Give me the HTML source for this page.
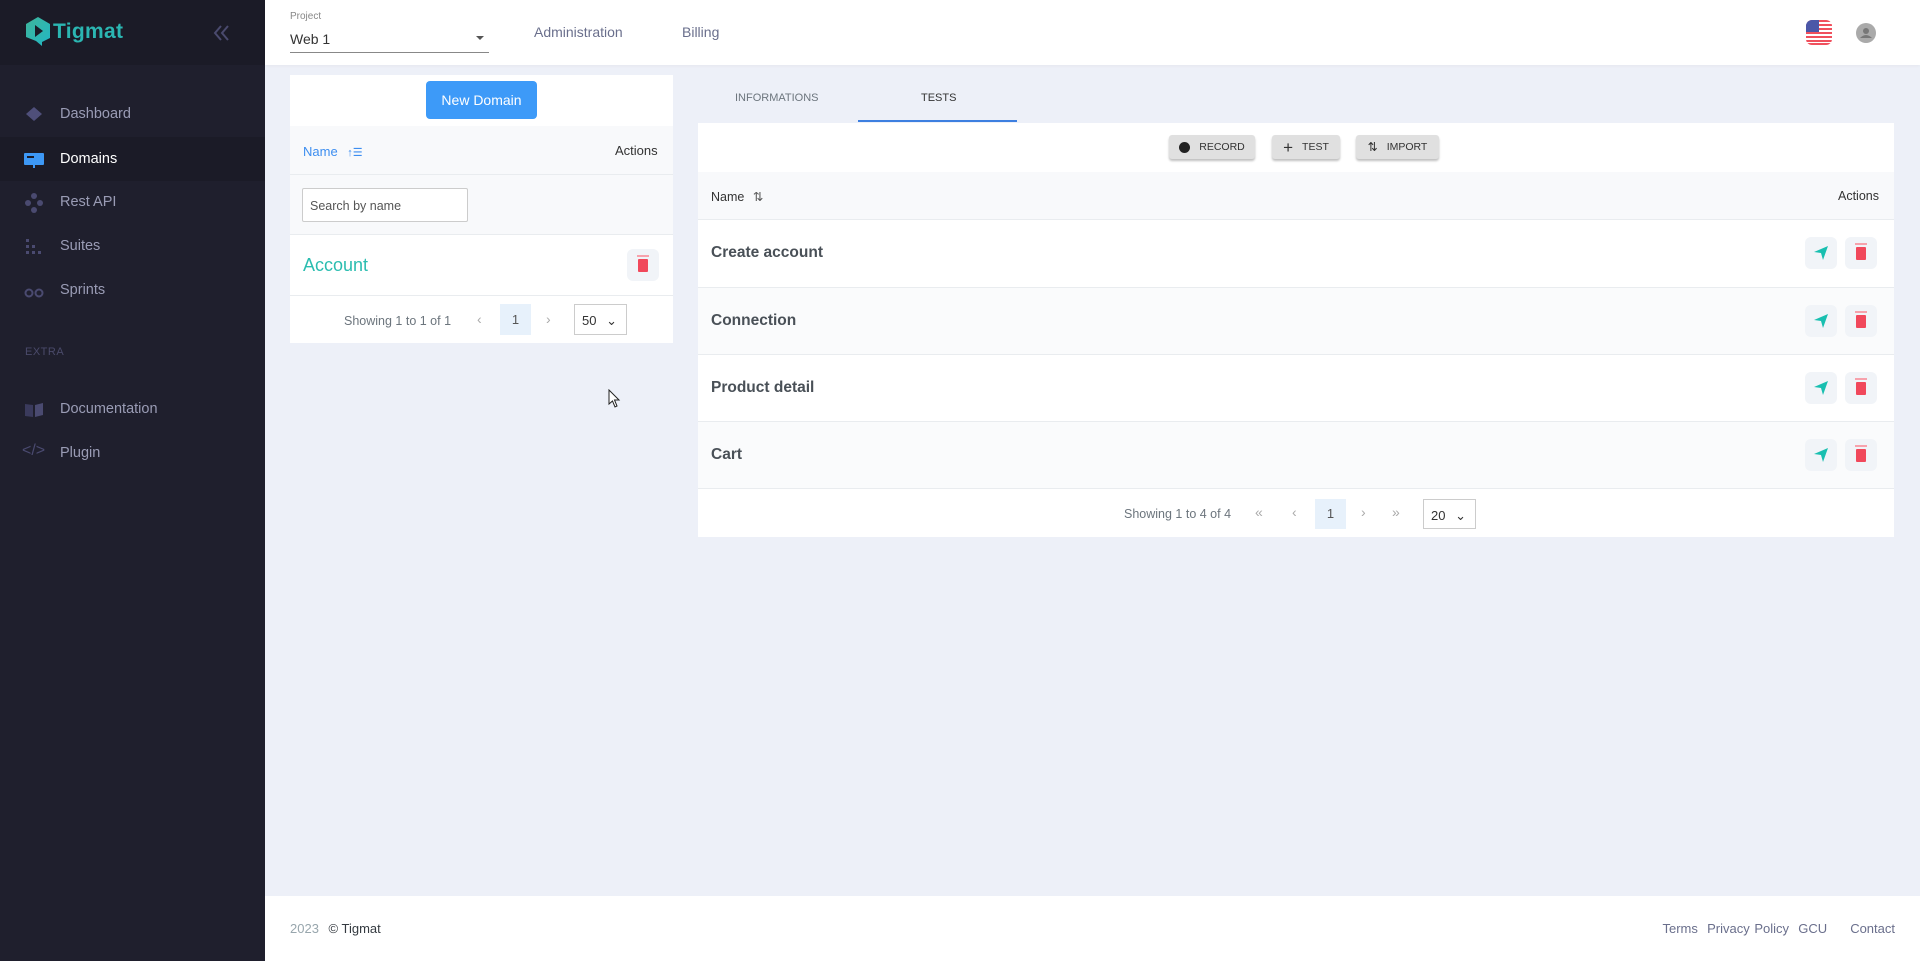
<!DOCTYPE html>
<html><head><meta charset="utf-8"><style>
*{box-sizing:border-box;margin:0;padding:0}
body{width:1920px;height:961px;overflow:hidden;background:#edf0f8;font-family:"Liberation Sans",sans-serif;position:relative;color:#343a40}
.abs{position:absolute}
#sb{left:0;top:0;width:265px;height:961px;background:#1f1f2d}
#logo{left:0;top:0;width:265px;height:65px;background:#1b1b27}
.nav{left:0;width:265px;height:44px;display:flex;align-items:center;padding-left:60px;font-size:14.5px;color:#9a9cb5}
.nav .ic{position:absolute;left:24px;top:13px;width:20px;height:18px}
#hdr{left:265px;top:0;width:1655px;height:65px;background:#fff;box-shadow:0 1px 3px rgba(0,0,0,.04)}
.card{background:#fff}
.btn{position:absolute;height:24px;top:135px;background:#e0e0e0;border-radius:3px;box-shadow:0 2px 2px rgba(0,0,0,.25);font-size:10.5px;color:#333;display:flex;align-items:center;justify-content:center;gap:9px}
.row{position:absolute;left:698px;width:1196px;height:67px;border-top:1px solid #e9ecef;font-size:15.5px;font-weight:bold;color:#495057;padding-left:13px;display:flex;align-items:center}
.ab{position:absolute;width:32px;height:32px;background:#f1f4f8;border-radius:6px;top:17px}
.trash{position:absolute;left:11px;top:10px;width:10px;height:13px;background:#f1485b;border-radius:1px}
.trash:before{content:"";position:absolute;left:-1px;top:-4px;width:12px;height:2px;background:#f7a2ac}
</style></head><body>
<div id="sb" class="abs"></div>
<div id="logo" class="abs">
<svg class="abs" style="left:26px;top:17px" width="24" height="30" viewBox="0 0 24 30"><defs><linearGradient id="g" x1="0" y1="0" x2="1" y2="1"><stop offset="0" stop-color="#3fb59a"/><stop offset="1" stop-color="#21b6c4"/></linearGradient></defs><path d="M12 0 L24 7 V21 L16 25 L16 29 L10 24 L0 20 V7Z" fill="url(#g)"/><path d="M9 8 L17 14 L9 20Z" fill="#1b1b27"/></svg>
<div class="abs" style="left:53px;top:20px;font-size:21px;font-weight:bold;color:#2bb6b2;letter-spacing:.3px">Tigmat</div>
<svg class="abs" style="left:212px;top:24px" width="20" height="18"><path d="M9 2 L3 9 L9 16 M16 2 L10 9 L16 16" stroke="#4a4a6e" stroke-width="2" fill="none"/></svg>
</div>
<div class="nav abs" style="top:92px"><span class="ic"><svg width="20" height="20"><path d="M10 2 L18 9 L10 16 L2 9Z" fill="#4f4f7a"/></svg></span>Dashboard</div>
<div class="nav abs" style="top:137px;background:#1b1b27;color:#fff"><span class="ic"><svg width="20" height="20"><rect x="0" y="3" width="20" height="12" rx="1" fill="#3d98f5"/><rect x="3" y="6" width="7" height="2" fill="#1b1b27"/><rect x="9" y="15" width="2" height="3" fill="#3d98f5"/></svg></span>Domains</div>
<div class="nav abs" style="top:180px"><span class="ic"><svg width="20" height="20"><circle cx="10" cy="3" r="3" fill="#4a4a70"/><circle cx="4" cy="10" r="3" fill="#4a4a70"/><circle cx="16" cy="10" r="3" fill="#4a4a70"/><circle cx="10" cy="17" r="3" fill="#4a4a70"/></svg></span>Rest API</div>
<div class="nav abs" style="top:224px"><span class="ic"><svg width="20" height="20"><g fill="#4a4a70"><rect x="2" y="2" width="3" height="3"/><rect x="2" y="8" width="3" height="3"/><rect x="2" y="14" width="3" height="3"/><rect x="8" y="14" width="3" height="3"/><rect x="14" y="14" width="3" height="3"/><rect x="8" y="8" width="3" height="3"/></g></svg></span>Suites</div>
<div class="nav abs" style="top:268px"><span class="ic"><svg width="22" height="20"><circle cx="5" cy="12" r="3.5" stroke="#4a4a70" stroke-width="2" fill="none"/><circle cx="15" cy="12" r="3.5" stroke="#4a4a70" stroke-width="2" fill="none"/></svg></span>Sprints</div>
<div class="abs" style="left:25px;top:346px;font-size:11px;color:#4a4a6a;letter-spacing:.5px">EXTRA</div>
<div class="nav abs" style="top:387px"><span class="ic"><svg width="20" height="20"><path d="M1 4 L9 5 V17 L1 16Z" fill="#3a3a5c"/><path d="M11 5 L19 3 V15 L11 17Z" fill="#4a4a70"/></svg></span>Documentation</div>
<div class="nav abs" style="top:431px"><span class="ic" style="color:#4a4a70;font-size:16px;top:11px;left:22px">&lt;/&gt;</span>Plugin</div>

<div id="hdr" class="abs"></div>
<div class="abs" style="left:290px;top:11px;font-size:10px;color:#888">Project</div>
<div class="abs" style="left:290px;top:31px;font-size:14px;color:#333">Web 1</div>
<div class="abs" style="left:476px;top:36px;width:0;height:0;border-left:4px solid transparent;border-right:4px solid transparent;border-top:4px solid #555"></div>
<div class="abs" style="left:290px;top:52px;width:199px;height:1px;background:#888"></div>
<div class="abs" style="left:534px;top:24px;font-size:14px;color:#6a6f8c">Administration</div>
<div class="abs" style="left:682px;top:24px;font-size:14px;color:#6a6f8c">Billing</div>
<svg class="abs" style="left:1806px;top:20px" width="26" height="25"><clipPath id="c"><rect width="26" height="25" rx="6"/></clipPath><g clip-path="url(#c)"><rect width="26" height="25" fill="#fff"/><g fill="#f0505d"><rect y="0" width="26" height="2"/><rect y="4" width="26" height="2"/><rect y="8" width="26" height="2"/><rect y="12" width="26" height="2"/><rect y="16" width="26" height="2"/><rect y="20" width="26" height="2"/><rect y="23" width="26" height="2"/></g><rect width="13" height="12" fill="#4b57a8"/></g></svg>
<svg class="abs" style="left:1856px;top:23px" width="20" height="20"><circle cx="10" cy="10" r="10" fill="#aaa"/><circle cx="10" cy="8" r="3" fill="#777"/><path d="M4 15 Q10 9 16 15Z" fill="#777"/></svg>

<div class="abs card" style="left:290px;top:75px;width:383px;height:268px"></div>
<div class="abs" style="left:426px;top:81px;width:111px;height:38px;background:#3d9af8;border-radius:4px;color:#fff;font-size:14px;display:flex;align-items:center;justify-content:center">New Domain</div>
<div class="abs" style="left:290px;top:126px;width:383px;height:49px;background:#f8f9fb;border-bottom:1px solid #e9ecef"></div>
<div class="abs" style="left:303px;top:144px;font-size:13px;color:#3d8ef0">Name <span style="font-size:11px;margin-left:6px">↑☰</span></div>
<div class="abs" style="left:615px;top:143px;font-size:13px;color:#333">Actions</div>
<div class="abs" style="left:290px;top:175px;width:383px;height:60px;background:#f8f9fb;border-bottom:1px solid #e9ecef"></div>
<div class="abs" style="left:302px;top:188px;width:166px;height:34px;background:#fff;border:1px solid #ccc;border-radius:2px;font-size:12.5px;color:#555;padding:10px 0 0 7px">Search by name</div>
<div class="abs" style="left:303px;top:255px;font-size:18px;color:#2bbdb0">Account</div>
<div class="abs ab" style="left:627px;top:249px"><div class="trash"></div></div>
<div class="abs" style="left:290px;top:295px;width:383px;height:1px;background:#e9ecef"></div>
<div class="abs" style="left:344px;top:314px;font-size:12.5px;color:#6c757d">Showing 1 to 1 of 1</div>
<div class="abs" style="left:477px;top:311px;font-size:14px;color:#aaa">‹</div>
<div class="abs" style="left:500px;top:304px;width:31px;height:31px;background:#e7f1fb;font-size:13px;color:#555;text-align:center;line-height:31px">1</div>
<div class="abs" style="left:546px;top:311px;font-size:14px;color:#aaa">›</div>
<div class="abs" style="left:574px;top:304px;width:53px;height:31px;border:1px solid #ccc;font-size:13px;color:#333;padding:8px 0 0 7px">50 <span style="margin-left:6px">⌄</span></div>
<svg class="abs" style="left:608px;top:389px" width="14" height="20"><path d="M1 1 L1 15 L4.5 12 L7 18 L9 17 L6.5 11 L11 11Z" fill="#fff" stroke="#222"/></svg>

<div class="abs" style="left:735px;top:92px;font-size:11px;color:#6c757d">INFORMATIONS</div>
<div class="abs" style="left:921px;top:92px;font-size:11px;color:#333">TESTS</div>
<div class="abs" style="left:858px;top:120px;width:159px;height:2px;background:#3d7fe0"></div>
<div class="abs card" style="left:698px;top:123px;width:1196px;height:414px"></div>
<div class="btn" style="left:1169px;width:86px"><span style="width:11px;height:11px;background:#222;border-radius:50%"></span>RECORD</div>
<div class="btn" style="left:1272px;width:68px"><span style="font-size:17px;line-height:1">+</span>TEST</div>
<div class="btn" style="left:1356px;width:83px"><span style="font-size:12px">⇅</span>IMPORT</div>
<div class="abs" style="left:698px;top:172px;width:1196px;height:47px;background:#f8f9fb"></div>
<div class="abs" style="left:711px;top:189px;font-size:12.5px;color:#333">Name <span style="margin-left:5px;color:#555">⇅</span></div>
<div class="abs" style="left:1838px;top:189px;font-size:12.5px;color:#333">Actions</div>
<div class="row" style="top:219px;background:#fff">Create account<div class="ab" style="left:1107px"><svg style="position:absolute;left:8px;top:8px" width="16" height="16"><path d="M15 1 L1 7 L8 8 L10 15Z" fill="#19bfb0"/></svg></div><div class="ab" style="left:1147px"><div class="trash"></div></div></div>
<div class="row" style="top:287px;background:#fafbfc">Connection<div class="ab" style="left:1107px"><svg style="position:absolute;left:8px;top:8px" width="16" height="16"><path d="M15 1 L1 7 L8 8 L10 15Z" fill="#19bfb0"/></svg></div><div class="ab" style="left:1147px"><div class="trash"></div></div></div>
<div class="row" style="top:354px;background:#fff">Product detail<div class="ab" style="left:1107px"><svg style="position:absolute;left:8px;top:8px" width="16" height="16"><path d="M15 1 L1 7 L8 8 L10 15Z" fill="#19bfb0"/></svg></div><div class="ab" style="left:1147px"><div class="trash"></div></div></div>
<div class="row" style="top:421px;background:#fafbfc">Cart<div class="ab" style="left:1107px"><svg style="position:absolute;left:8px;top:8px" width="16" height="16"><path d="M15 1 L1 7 L8 8 L10 15Z" fill="#19bfb0"/></svg></div><div class="ab" style="left:1147px"><div class="trash"></div></div></div>
<div class="abs" style="left:698px;top:488px;width:1196px;height:1px;background:#e9ecef"></div>
<div class="abs" style="left:1124px;top:507px;font-size:12.5px;color:#6c757d">Showing 1 to 4 of 4</div>
<div class="abs" style="left:1255px;top:504px;font-size:14px;color:#aaa">«</div>
<div class="abs" style="left:1292px;top:504px;font-size:14px;color:#aaa">‹</div>
<div class="abs" style="left:1315px;top:499px;width:31px;height:30px;background:#e7f1fb;font-size:13px;color:#555;text-align:center;line-height:30px">1</div>
<div class="abs" style="left:1361px;top:504px;font-size:14px;color:#aaa">›</div>
<div class="abs" style="left:1392px;top:504px;font-size:14px;color:#aaa">»</div>
<div class="abs" style="left:1423px;top:499px;width:53px;height:30px;border:1px solid #ccc;font-size:13px;color:#333;padding:8px 0 0 7px">20 <span style="margin-left:6px">⌄</span></div>

<div class="abs" style="left:265px;top:896px;width:1655px;height:65px;background:#fff"></div>
<div class="abs" style="left:290px;top:921px;font-size:13px;color:#98a6ad">2023 <span style="color:#343a40;margin-left:6px">© Tigmat</span></div>
<div class="abs" style="right:25px;top:921px;font-size:13px;color:#6a6f8c;word-spacing:1px">Terms&nbsp; Privacy Policy&nbsp; GCU&nbsp;&nbsp;&nbsp;&nbsp; Contact</div>
</body></html>
